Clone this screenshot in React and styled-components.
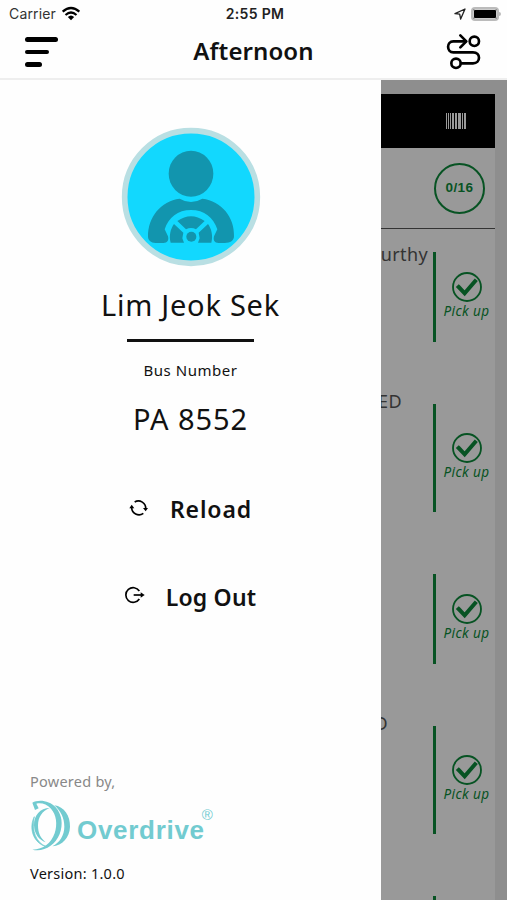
import React from 'react'
import styled, { createGlobalStyle } from 'styled-components'

const students = [
  { name: 'kurthy', inset: 5, nameTop: 10, bar: 90 },
  { name: 'ED', inset: 31, nameTop: -4, bar: 108 },
  { name: '', inset: 0, nameTop: 10, bar: 90 },
  { name: 'D', inset: 45, nameTop: -4, bar: 108 },
  { name: '', inset: 0, nameTop: 10, bar: 90 },
]

const barcode = [
  [0, 1], [2, 1], [4, 1], [6, 2], [9, 2], [12, 3], [16, 1], [18, 2],
]

const WifiIcon = () => (
  <svg width="18" height="14" viewBox="0 0 54 42" fill="none" stroke="#000" strokeWidth="6.5">
    <path d="M2 14Q27 -8 52 14" />
    <path d="M10.500 24Q27 9 43.500 24" />
    <path d="M17.500 30Q27 21 36.500 30L27 40Z" fill="#000" stroke="none" />
  </svg>
)

const LocationIcon = () => (
  <svg width="12" height="12" viewBox="0 0 36 36" fill="none" stroke="#222" strokeWidth="4" strokeLinejoin="round">
    <path d="M33 3L3 17L17 18.500L20 33Z" />
  </svg>
)

const RouteIcon = () => (
  <svg width="36" height="38" viewBox="0 0 108 114" fill="none" stroke="#000" strokeWidth="8" strokeLinecap="round" strokeLinejoin="round">
    <circle cx="88" cy="25" r="14" />
    <circle cx="33" cy="91" r="14" />
    <path d="M62 25H25C4 25 4 58 25 58H84C108 58 108 91 84 91H48" />
    <path d="M46 7L64 25L46 43" />
  </svg>
)

const DriverIcon = () => (
  <svg width="138" height="138" viewBox="35 24 414 414">
    <circle cx="242" cy="231" r="199" fill="#12d8fe" stroke="#b9dfe3" strokeWidth="17" />
    <g fill="#1295ae">
      <ellipse cx="242" cy="161" rx="67" ry="69" />
      <path d="M208 236Q242 256 276 236C334 243 373 292 371 349C371 362 360 369 343 369H325C312 369 308 361 311 349L321 328C309 292 282 270 242 270C202 270 175 292 163 328L173 349C176 361 172 369 159 369H136C121 369 113 361 113 349C113 292 151 243 208 236Z" />
      <path d="M201 303Q242 275 283 303L257 328Q242 320 227 328Z" />
      <path d="M191 312L219 338L216 355L221 368H181C175 347 181 326 191 312Z" />
      <path d="M293 312L265 338L268 355L263 368H303C309 347 303 326 293 312Z" />
      <circle cx="243" cy="350" r="15" />
    </g>
  </svg>
)

const ReloadIcon = () => (
  <svg width="20" height="18" viewBox="0 0 60 54" fill="none" stroke="#000" strokeWidth="5">
    <path d="M17 6A22 22 0 0 1 50 27" />
    <path d="M43 40A22 22 0 0 1 8 22" />
    <path d="M42 24L57 24L50 34Z" fill="#000" stroke="none" />
    <path d="M1 25L16 25L8 14Z" fill="#000" stroke="none" />
  </svg>
)

const LogoutIcon = () => (
  <svg width="20" height="18" viewBox="0 0 60 54" fill="none" stroke="#000" strokeWidth="5">
    <path d="M43 9A22 22 0 1 0 43 33" />
    <path d="M26 21H52" />
    <path d="M47 13L59 21L47 29Z" fill="#000" stroke="none" />
  </svg>
)

const CheckIcon = () => (
  <svg width="30" height="30" viewBox="0 0 90 90" fill="none" stroke="#075323">
    <circle cx="45" cy="45" r="42" strokeWidth="5.500" />
    <path d="M20 45L38 64L69 28" strokeWidth="12" strokeLinecap="square" />
  </svg>
)

const BarcodeIcon = () => (
  <svg width="20" height="16" viewBox="0 0 20 16" fill="#9a9a9a">
    {barcode.map(([x, w]) => (
      <rect key={x} x={x} width={w} height="16" />
    ))}
  </svg>
)

const OverdriveMark = () => (
  <svg width="40" height="52" viewBox="0 0 120 156" fill="#72cbd0">
    <path d="M4 8C22 -3 56 1 74 22C93 44 97 74 86 102C72 137 38 157 4 149C38 148 60 130 71 100C80 72 76 44 60 26C47 12 30 7 16 11L23 25L12 30Z" />
    <path d="M70 16C100 20 118 48 117 80C116 112 94 137 64 139C87 127 100 105 100 80C100 55 90 34 70 16Z" />
    <path d="M56 24C28 24 8 46 9 76C10 102 24 120 44 127C28 114 21 98 21 76C21 52 34 32 56 24Z" />
    <path d="M10 50C-7 82 5 129 46 140C15 128 1 92 10 50Z" stroke="#72cbd0" strokeWidth="2" />
  </svg>
)

const App = () => (
  <Screen>
    <GlobalStyle />
    <Header>
      <StatusBar>
        <Carrier>
          Carrier <WifiIcon />
        </Carrier>
        <Time>2:55 PM</Time>
        <Indicators>
          <LocationIcon />
          <Battery />
        </Indicators>
      </StatusBar>
      <NavBar>
        <Menu>
          <MenuLine $width={33} />
          <MenuLine $width={24} />
          <MenuLine $width={17} />
        </Menu>
        <Title>Afternoon</Title>
        <RouteIcon />
      </NavBar>
    </Header>
    <Body>
      <Drawer>
        <Profile>
          <DriverIcon />
          <DriverName>Lim Jeok Sek</DriverName>
          <Divider />
          <Label>Bus Number</Label>
          <BusNumber>PA 8552</BusNumber>
        </Profile>
        <Actions>
          <Action $gap={21} $spacing={0.9}>
            <ReloadIcon />
            Reload
          </Action>
          <Action $gap={21} $spacing={0.2}>
            <LogoutIcon />
            Log Out
          </Action>
        </Actions>
        <Footer>
          <Powered>Powered by,</Powered>
          <Brand>
            <OverdriveMark />
            <BrandName>Overdrive</BrandName>
            <Registered>®</Registered>
          </Brand>
          <Version>Version: 1.0.0</Version>
        </Footer>
      </Drawer>
      <Backdrop>
        <TripCard>
          <TripBar>
            <BarcodeIcon />
          </TripBar>
          <Summary>
            <Counter>0/16</Counter>
          </Summary>
          {students.map((student, i) => (
            <Student key={i}>
              <Name $top={student.nameTop} $inset={student.inset}>
                {student.name}
              </Name>
              <Bar $height={student.bar} />
              <Pickup>
                <CheckIcon />
                <span>Pick up</span>
              </Pickup>
            </Student>
          ))}
        </TripCard>
      </Backdrop>
    </Body>
  </Screen>
)

const GlobalStyle = createGlobalStyle`
  body {
    margin: 0;
    background: #fff;
  }

  * {
    box-sizing: border-box;
  }

  svg {
    display: block;
    flex: none;
    overflow: visible;
  }
`

const Screen = styled.div`
  display: flex;
  flex-direction: column;
  width: 507px;
  height: 900px;
  overflow: hidden;
  background: #fefefe;
  color: #111;
  font-family: 'Noto Sans', sans-serif;
`

const Header = styled.header`
  flex: none;
  height: 80px;
  border-bottom: 2px solid #eee;
`

const StatusBar = styled.div`
  display: grid;
  grid-template-columns: 1fr auto 1fr;
  align-items: center;
  height: 27px;
  padding: 0 6px 0 9px;
  font-family: Inter, sans-serif;
  font-size: 14px;
`

const Carrier = styled.div`
  display: flex;
  align-items: center;
  gap: 6px;
  color: #333;
  letter-spacing: 0.15px;
`

const Time = styled.div`
  color: #222;
  font-weight: 600;
  font-size: 14px;
  letter-spacing: 0.3px;
`

const Indicators = styled.div`
  display: flex;
  justify-content: flex-end;
  align-items: center;
  gap: 5px;
`

const Battery = styled.div`
  position: relative;
  width: 28px;
  height: 14px;
  margin-right: 2px;
  border: 2px solid #bbb;
  border-radius: 4px;
  background: #000;
  box-shadow: inset 0 0 0 1px #ccc;

  &::after {
    content: '';
    position: absolute;
    top: 3px;
    right: -4px;
    width: 2px;
    height: 4px;
    border-radius: 0 2px 2px 0;
    background: #bbb;
  }
`

const NavBar = styled.div`
  display: flex;
  align-items: center;
  justify-content: space-between;
  height: 50px;
  padding: 0 26px 0 25px;
`

const Menu = styled.div`
  display: flex;
  flex-direction: column;
  gap: 8px;
  width: 36px;
`

const MenuLine = styled.span`
  width: ${({ $width }) => $width}px;
  height: 4.5px;
  border-radius: 3px;
  background: #000;
`

const Title = styled.h1`
  margin: 0 0 2px 1px;
  font-size: 24px;
  line-height: 30px;
  font-weight: 600;
  letter-spacing: 0.1px;
`

const Body = styled.main`
  display: flex;
  flex: 1;
  min-height: 0;
`

const Drawer = styled.aside`
  display: flex;
  flex-direction: column;
  flex: none;
  width: 381px;
`

const Profile = styled.section`
  display: flex;
  flex-direction: column;
  align-items: center;
  padding-top: 48px;
`

const DriverName = styled.h2`
  margin: 20px 0 0;
  font-size: 29px;
  line-height: 38px;
  font-weight: 400;
  letter-spacing: 0.75px;
`

const Divider = styled.div`
  width: 127px;
  height: 3px;
  margin-top: 15px;
  background: #111;
`

const Label = styled.div`
  margin-top: 18px;
  font-size: 15px;
  line-height: 20px;
  letter-spacing: 0.55px;
`

const BusNumber = styled.div`
  margin-top: 20px;
  font-size: 29px;
  line-height: 38px;
  letter-spacing: 0.9px;
`

const Actions = styled.nav`
  display: flex;
  flex-direction: column;
  align-items: center;
  gap: 56px;
  padding-top: 55px;
`

const Action = styled.a`
  display: flex;
  align-items: center;
  gap: ${({ $gap }) => $gap}px;
  font-size: 23px;
  line-height: 32px;
  font-weight: 600;
  letter-spacing: ${({ $spacing }) => $spacing}px;
`

const Footer = styled.footer`
  margin-top: auto;
  padding: 0 0 17px 30px;
  font-size: 14.5px;
  line-height: 20px;
  letter-spacing: 0.25px;
`

const Powered = styled.div`
  color: #888;
`

const Brand = styled.div`
  display: flex;
  align-items: flex-start;
  margin: 9px 0 11px 1px;
  color: #72cbd0;
`

const BrandName = styled.span`
  margin: 12px 0 0 6px;
  font-family: 'Liberation Sans', sans-serif;
  font-size: 26px;
  line-height: 36px;
  font-weight: 700;
  letter-spacing: 0.7px;
`

const Registered = styled.span`
  margin: 5px 0 0 -3px;
  font-family: 'Liberation Sans', sans-serif;
  font-size: 15px;
`

const Version = styled.div`
  color: #111;
`

const Backdrop = styled.section`
  flex: 1;
  padding: 14px 12px 0 0;
  background: #8e8e8e;
`

const TripCard = styled.div`
  height: 806px;
  overflow: hidden;
  background: #999;
`

const TripBar = styled.div`
  display: flex;
  align-items: center;
  justify-content: flex-end;
  height: 54px;
  padding-right: 29px;
  background: #000;
`

const Summary = styled.div`
  display: flex;
  align-items: center;
  justify-content: flex-end;
  height: 81px;
  padding-right: 10px;
  border-bottom: 1px solid #333;
`

const Counter = styled.div`
  width: 51px;
  height: 51px;
  border: 2.5px solid #075323;
  border-radius: 50%;
  color: #075323;
  font: 700 13.5px/46px 'Liberation Sans', sans-serif;
  letter-spacing: 0.4px;
  text-align: center;
`

const Student = styled.article`
  display: flex;
  align-items: flex-start;
  height: 161px;
`

const Name = styled.div`
  display: flex;
  justify-content: flex-end;
  flex: none;
  width: 52px;
  margin-top: ${({ $top }) => $top}px;
  padding-right: ${({ $inset }) => $inset}px;
  overflow: hidden;
  color: #333;
  font-size: 18px;
  line-height: 30px;
  letter-spacing: 0.4px;
`

const Bar = styled.div`
  flex: none;
  width: 3px;
  height: ${({ $height }) => $height}px;
  margin-top: ${({ $height }) => 68 - $height / 2}px;
  background: #075323;
`

const Pickup = styled.div`
  display: flex;
  flex-direction: column;
  align-items: center;
  flex: 1;
  padding: 43px 0 0 2px;
  color: #075323;
  font-size: 13.5px;
  font-style: italic;
  line-height: 18px;
  letter-spacing: 0.4px;
  white-space: nowrap;
`

export default App
